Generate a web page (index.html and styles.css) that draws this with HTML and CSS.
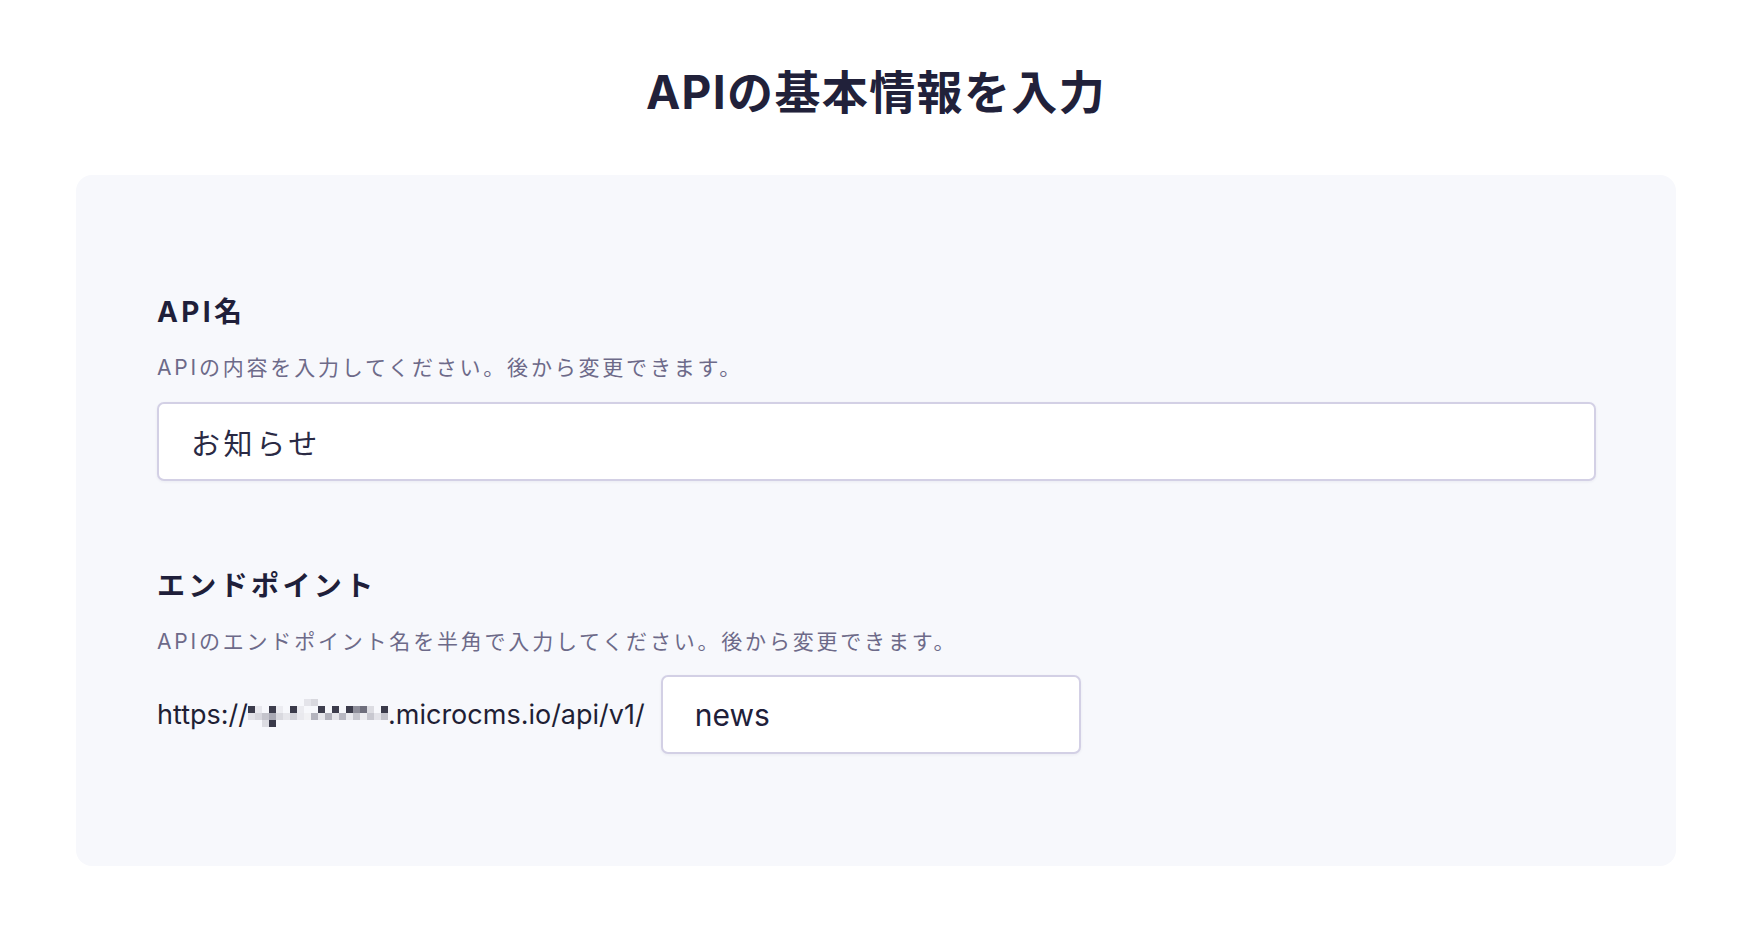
FILE: index.html
```html
<!DOCTYPE html>
<html lang="ja">
<head>
<meta charset="utf-8">
<title>APIの基本情報を入力</title>
<link rel="stylesheet" href="styles.css">
</head>
<body>
<main class="page">
  <h1 class="title">APIの基本情報を入力</h1>
  <section class="card">
    <div class="field">
      <h2 class="label">API名</h2>
      <p class="desc">APIの内容を入力してください。後から変更できます。</p>
      <div class="input input-wide"><span class="value-ja">お知らせ</span></div>
    </div>
    <div class="field field-endpoint">
      <h2 class="label">エンドポイント</h2>
      <p class="desc">APIのエンドポイント名を半角で入力してください。後から変更できます。</p>
      <div class="endpoint-row">
        <span class="url">https://<svg class="mosaic" width="140" height="29" viewBox="0 0 140 29" aria-hidden="true">
          <rect x="56" y="0" width="7" height="7" fill="#e4e4ea"/>
          <rect x="63" y="0" width="7" height="7" fill="#d8d8de"/>
          <rect x="0" y="7" width="7" height="7" fill="#3b3b4b"/>
          <rect x="7" y="7" width="7" height="7" fill="#e8e8ee"/>
          <rect x="21" y="7" width="7" height="7" fill="#3d3d4d"/>
          <rect x="28" y="7" width="7" height="7" fill="#ececf1"/>
          <rect x="42" y="7" width="7" height="7" fill="#3a3a4a"/>
          <rect x="49" y="7" width="7" height="7" fill="#ebebf0"/>
          <rect x="70" y="7" width="7" height="7" fill="#3e3e4e"/>
          <rect x="84" y="7" width="7" height="7" fill="#3c3c4c"/>
          <rect x="98" y="7" width="7" height="7" fill="#3b3b4b"/>
          <rect x="105" y="7" width="7" height="7" fill="#8e8e9a"/>
          <rect x="112" y="7" width="7" height="7" fill="#6f6f7d"/>
          <rect x="119" y="7" width="7" height="7" fill="#dcdce2"/>
          <rect x="133" y="7" width="7" height="7" fill="#3b3b4b"/>
          <rect x="0" y="14" width="7" height="7" fill="#e2e2e8"/>
          <rect x="7" y="14" width="7" height="7" fill="#d6d6dd"/>
          <rect x="14" y="14" width="7" height="7" fill="#c4c4cc"/>
          <rect x="21" y="14" width="7" height="7" fill="#a9a9b4"/>
          <rect x="28" y="14" width="7" height="7" fill="#d9d9df"/>
          <rect x="35" y="14" width="7" height="7" fill="#e6e6eb"/>
          <rect x="42" y="14" width="7" height="7" fill="#d1d1d8"/>
          <rect x="49" y="14" width="7" height="7" fill="#e9e9ee"/>
          <rect x="56" y="14" width="7" height="7" fill="#f1f1f4"/>
          <rect x="63" y="14" width="7" height="7" fill="#b4b4be"/>
          <rect x="70" y="14" width="7" height="7" fill="#e7e7ec"/>
          <rect x="77" y="14" width="7" height="7" fill="#b2b2bc"/>
          <rect x="84" y="14" width="7" height="7" fill="#e5e5ea"/>
          <rect x="91" y="14" width="7" height="7" fill="#b8b8c2"/>
          <rect x="98" y="14" width="7" height="7" fill="#e9e9ee"/>
          <rect x="105" y="14" width="7" height="7" fill="#c6c6ce"/>
          <rect x="112" y="14" width="7" height="7" fill="#ededf1"/>
          <rect x="119" y="14" width="7" height="7" fill="#c8c8d0"/>
          <rect x="126" y="14" width="7" height="7" fill="#e3e3e9"/>
          <rect x="133" y="14" width="7" height="7" fill="#c3c3cb"/>
          <rect x="14" y="21" width="7" height="7" fill="#dcdce2"/>
          <rect x="21" y="21" width="7" height="7" fill="#3a3a4a"/>
        </svg>.microcms.io/api/v1/</span>
        <div class="input input-short"><span class="value-en">news</span></div>
      </div>
    </div>
  </section>
</main>
</body>
</html>
```

FILE: styles.css
```css
html, body {
  margin: 0;
  padding: 0;
  background: #ffffff;
}

body {
  font-family: "Inter", "Noto Sans CJK JP", sans-serif;
  color: #22223a;
}

.page {
  display: flex;
  flex-direction: column;
  align-items: flex-start;
  padding: 59px 72px 0 76px;
}

.title {
  align-self: stretch;
  margin: 0;
  font-size: 46px;
  line-height: 66px;
  font-weight: 700;
  text-align: center;
  color: #21213a;
  letter-spacing: 0.03em;
}

.card {
  margin-top: 50px;
  width: 1600px;
  box-sizing: border-box;
  padding: 118px 80px 112px 81px;
  background: #f7f8fc;
  border-radius: 16px;
  display: flex;
  flex-direction: column;
  gap: 86px;
}

.field {
  display: flex;
  flex-direction: column;
  align-items: flex-start;
}

.label {
  margin: 0;
  font-size: 28px;
  line-height: 39px;
  font-weight: 700;
  color: #1f1f3a;
  letter-spacing: 0.12em;
}

.desc {
  margin: 20px 0 0;
  font-size: 21px;
  line-height: 31px;
  font-weight: 400;
  color: #6d6a89;
  letter-spacing: 2.8px;
}

.input {
  margin-top: 19px;
  box-sizing: border-box;
  height: 79px;
  background: #ffffff;
  border: 2px solid #d3d0e5;
  border-radius: 7px;
  box-shadow: 0 1px 3px rgba(40, 40, 80, 0.06);
  display: flex;
  align-items: center;
}

.input-wide {
  align-self: stretch;
  padding-left: 32px;
}

.value-ja {
  font-size: 29px;
  color: #2a2a44;
  letter-spacing: 3.6px;
}

.endpoint-row {
  margin-top: 18px;
  display: flex;
  align-items: center;
  gap: 16px;
}

.endpoint-row .input {
  margin-top: 0;
}

.url {
  font-family: "Inter", sans-serif;
  font-size: 27px;
  color: #1f1f35;
  white-space: nowrap;
}

.mosaic {
  display: inline-block;
  vertical-align: -4px;
}

.input-short {
  width: 420px;
  padding-left: 32px;
}

.value-en {
  font-family: "Inter", sans-serif;
  font-size: 30px;
  color: #20203a;
}
```
